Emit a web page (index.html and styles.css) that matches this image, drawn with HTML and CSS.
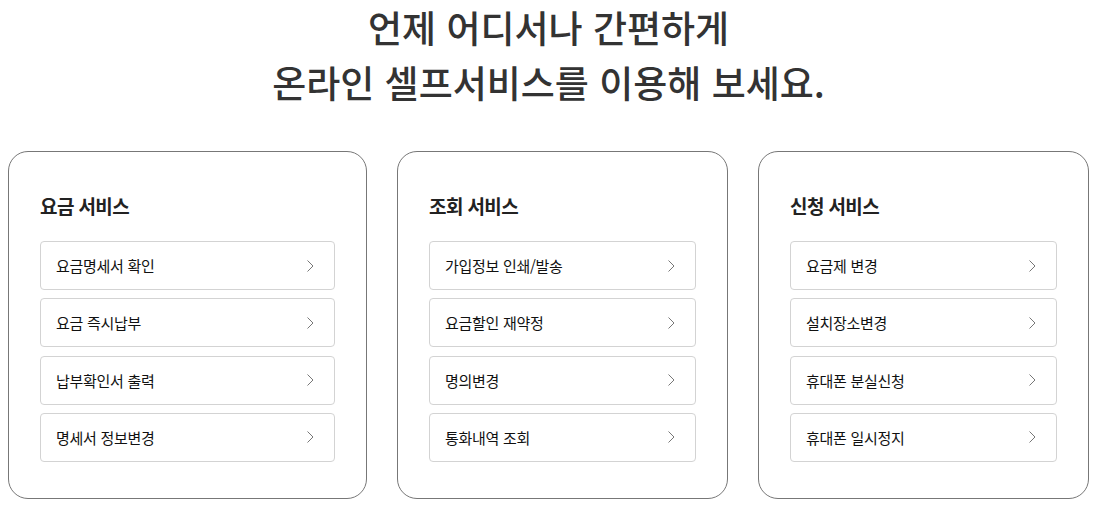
FILE: index.html
```html
<!DOCTYPE html>
<html lang="ko">
<head>
  <meta charset="utf-8">
  <title>온라인 셀프서비스</title>
  <link rel="stylesheet" href="styles.css">
</head>
<body>
  <div class="container">
    <h1 class="headline">언제 어디서나 간편하게<br>온라인 셀프서비스를 이용해 보세요.</h1>

    <div class="cards">
      <!-- 요금 서비스 -->
      <div class="card card-fee">
        <h2 class="card-title">요금 서비스</h2>
        <ul class="menu">
          <li><a href="#">요금명세서 확인<svg class="arrow" viewBox="0 0 7 12"><polyline points="0.5,0.5 6,6 0.5,11.5"/></svg></a></li>
          <li><a href="#">요금 즉시납부<svg class="arrow" viewBox="0 0 7 12"><polyline points="0.5,0.5 6,6 0.5,11.5"/></svg></a></li>
          <li><a href="#">납부확인서 출력<svg class="arrow" viewBox="0 0 7 12"><polyline points="0.5,0.5 6,6 0.5,11.5"/></svg></a></li>
          <li><a href="#">명세서 정보변경<svg class="arrow" viewBox="0 0 7 12"><polyline points="0.5,0.5 6,6 0.5,11.5"/></svg></a></li>
        </ul>
      </div>

      <!-- 조회 서비스 -->
      <div class="card card-lookup">
        <h2 class="card-title">조회 서비스</h2>
        <ul class="menu">
          <li><a href="#">가입정보 인쇄/발송<svg class="arrow" viewBox="0 0 7 12"><polyline points="0.5,0.5 6,6 0.5,11.5"/></svg></a></li>
          <li><a href="#">요금할인 재약정<svg class="arrow" viewBox="0 0 7 12"><polyline points="0.5,0.5 6,6 0.5,11.5"/></svg></a></li>
          <li><a href="#">명의변경<svg class="arrow" viewBox="0 0 7 12"><polyline points="0.5,0.5 6,6 0.5,11.5"/></svg></a></li>
          <li><a href="#">통화내역 조회<svg class="arrow" viewBox="0 0 7 12"><polyline points="0.5,0.5 6,6 0.5,11.5"/></svg></a></li>
        </ul>
      </div>

      <!-- 신청 서비스 -->
      <div class="card card-apply">
        <h2 class="card-title">신청 서비스</h2>
        <ul class="menu">
          <li><a href="#">요금제 변경<svg class="arrow" viewBox="0 0 7 12"><polyline points="0.5,0.5 6,6 0.5,11.5"/></svg></a></li>
          <li><a href="#">설치장소변경<svg class="arrow" viewBox="0 0 7 12"><polyline points="0.5,0.5 6,6 0.5,11.5"/></svg></a></li>
          <li><a href="#">휴대폰 분실신청<svg class="arrow" viewBox="0 0 7 12"><polyline points="0.5,0.5 6,6 0.5,11.5"/></svg></a></li>
          <li><a href="#">휴대폰 일시정지<svg class="arrow" viewBox="0 0 7 12"><polyline points="0.5,0.5 6,6 0.5,11.5"/></svg></a></li>
        </ul>
      </div>
    </div>
  </div>
</body>
</html>
```

FILE: styles.css
```css
body {
  margin: 0 8px;
  background-color: #fff;
  font-family: "Noto Sans CJK KR", "Noto Sans", sans-serif;
  color: #222;
}

.container {
  margin: 0 auto;
}

.headline {
  margin: 0;
  text-align: center;
  font-size: 37px;
  font-weight: 500;
  line-height: 55px;
  letter-spacing: 0;
  color: #333;
}

.cards {
  display: grid;
  grid-template-columns: 359fr 331fr 331fr;
  gap: 30px;
  margin-top: 41px;
}

.card {
  border: 1px solid #777;
  border-radius: 20px;
  padding: 40px 31px 36px;
}

.card-title {
  margin: 0 0 22px;
  font-size: 19px;
  font-weight: 700;
  line-height: 27px;
  letter-spacing: -0.6px;
  color: #222;
}

.menu {
  list-style: none;
  margin: 0;
  padding: 0;
}

.menu li + li {
  margin-top: 8.33px;
}

.menu a {
  display: flex;
  align-items: center;
  justify-content: space-between;
  height: 47px;
  padding: 0 20px 0 15px;
  border: 1px solid #d3d3d3;
  border-radius: 4px;
  font-size: 15px;
  letter-spacing: -0.3px;
  color: #111;
  text-decoration: none;
}

.arrow {
  width: 7px;
  height: 12px;
  fill: none;
  stroke: #777;
  stroke-width: 1;
}
```
